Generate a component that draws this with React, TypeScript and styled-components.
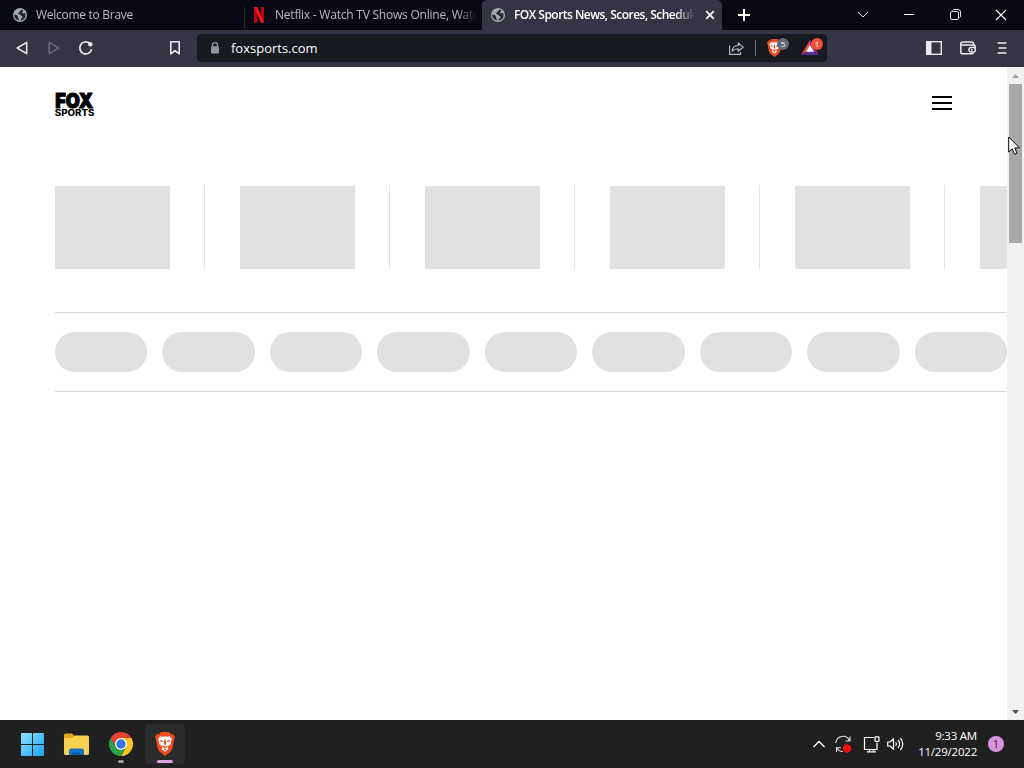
import React from 'react'

import styled, { createGlobalStyle } from 'styled-components'

const GlobalStyle = createGlobalStyle`
    * {
        box-sizing: border-box;
    }

    body {
        margin: 0;
        overflow: hidden;
        font-family: 'Open Sans', 'Noto Sans', sans-serif;
    }

    svg {
        display: block;
        flex: none;
        overflow: visible;
    }
`

const Desktop = styled.div`
    width: 1024px;
    height: 768px;
    display: flex;
    flex-direction: column;
    position: relative;
    overflow: hidden;
    background: #fff;
`

const TabStrip = styled.div`
    height: 30px;
    flex: none;
    display: flex;
    background: #090915;
    color: #fff;
`

const Tab = styled.div<{ $width: number; $inset: number; $active?: boolean }>`
    width: ${(props) => props.$width}px;
    height: 30px;
    padding: 0 5px 0 ${(props) => props.$inset}px;
    display: flex;
    align-items: center;
    border-radius: ${(props) => (props.$active ? '5px 5px 0 0' : '0')};
    background: ${(props) => (props.$active ? '#343445' : 'transparent')};
    color: ${(props) => (props.$active ? '#fff' : '#b9bac3')};
`

const TabDivider = styled.div`
    width: 1px;
    height: 22px;
    margin-top: 7px;
    background: #2b2b38;
`

const TabTitle = styled.div<{ $bold?: boolean; $spacing: number }>`
    flex: 1;
    margin-left: 9px;
    overflow: hidden;
    white-space: nowrap;
    font-size: 12px;
    line-height: 20px;
    font-weight: ${(props) => (props.$bold ? 650 : 400)};
    letter-spacing: ${(props) => props.$spacing}px;
    mask-image: linear-gradient(to left, transparent, #000 20px);
`

const CloseTab = styled.div`
    width: 14px;
    height: 14px;
    margin-left: 8px;
`

const NewTab = styled.div`
    width: 44px;
    display: flex;
    align-items: center;
    justify-content: center;
`

const WindowControls = styled.div`
    display: flex;
    margin-left: auto;
`

const WindowButton = styled.div`
    width: 46px;
    height: 29px;
    display: flex;
    align-items: center;
    justify-content: center;
`

const Toolbar = styled.div`
    height: 37px;
    flex: none;
    display: flex;
    align-items: center;
    padding: 0 0 1px 6px;
    background: #343445;
    color: #e9e9f2;
`

const ToolButton = styled.div<{ $dim?: boolean; $width?: number }>`
    width: ${(props) => props.$width ?? 32}px;
    height: 28px;
    display: flex;
    align-items: center;
    justify-content: center;
    color: ${(props) => (props.$dim ? '#707080' : 'inherit')};
`

const Bookmark = styled(ToolButton)`
    margin-left: 57px;
`

const AddressBar = styled.div`
    width: 630px;
    height: 28px;
    margin-left: 6px;
    margin-right: 90px;
    padding-left: 11px;
    display: flex;
    align-items: center;
    border-radius: 4px;
    background: #171921;
`

const Url = styled.div`
    flex: 1;
    margin-left: 9px;
    color: #fff;
    font-size: 13px;
    letter-spacing: 0;
    line-height: 26px;
`

const BarDivider = styled.div`
    width: 1px;
    height: 16px;
    margin: 0 11px 0 11px;
    background: #75767f;
`

const Extension = styled.div<{ $gap: number }>`
    position: relative;
    width: 22px;
    height: 20px;
    margin-right: ${(props) => props.$gap}px;
`

const ExtensionIcon = styled.div<{ $top: number }>`
    padding-top: ${(props) => props.$top}px;
`

const Badge = styled.div<{ $color: string }>`
    position: absolute;
    top: 0;
    right: 0;
    width: 12px;
    height: 12px;
    border-radius: 6px;
    background: ${(props) => props.$color};
    color: #fff;
    font-size: 8px;
    line-height: 12px;
    text-align: center;
`

const Viewport = styled.div`
    flex: 1;
    display: flex;
    min-height: 0;
    background: #fff;
`

const Page = styled.div`
    width: 1007px;
    padding-left: 55px;
    overflow: hidden;
`

const SiteHeader = styled.div`
    height: 118px;
    padding: 25px 55px 0 0;
    display: flex;
    justify-content: space-between;
`

const MenuButton = styled.div`
    width: 20px;
    height: 14px;
    margin-top: 4px;
    display: flex;
    flex-direction: column;
    justify-content: space-between;
`

const MenuBar = styled.div`
    height: 2px;
    background: #000;
`

const ScoreRow = styled.div`
    display: flex;
    height: 127px;
`

const ScoreCell = styled.div`
    width: 185px;
    height: 84px;
    flex: none;
    display: flex;
    justify-content: space-between;
    padding-right: 35px;
`

const ScoreCard = styled.div`
    width: 115px;
    height: 83px;
    margin-top: 1px;
    background: #e1e1e1;
`

const ScoreDivider = styled.div`
    width: 1px;
    background: #e4e4e4;
`

const PillRow = styled.div`
    height: 80px;
    display: flex;
    align-items: center;
    gap: 15.03px;
    border-top: 1px solid #d5d5d5;
    border-bottom: 1px solid #d5d5d5;
`

const Pill = styled.div`
    width: 92.44px;
    height: 40px;
    flex: none;
    border-radius: 20px;
    background: #e1e1e1;
`

const Scrollbar = styled.div`
    width: 17px;
    display: flex;
    flex-direction: column;
    align-items: center;
    background: #f1f1f1;
`

const ScrollArrow = styled.div`
    width: 17px;
    height: 17px;
    display: flex;
    align-items: center;
    justify-content: center;
`

const ScrollTrack = styled.div`
    flex: 1;
    width: 13px;
`

const ScrollThumb = styled.div`
    height: 159px;
    background: #a8a8a8;
`

const Taskbar = styled.div`
    height: 48px;
    flex: none;
    display: flex;
    align-items: center;
    padding: 0 20px 0 12px;
    background: #202020;
    color: #fff;
`

const TaskButton = styled.div<{ $active?: boolean }>`
    position: relative;
    width: 40px;
    height: 40px;
    margin-right: 4.4px;
    display: flex;
    align-items: center;
    justify-content: center;
    border-radius: 4px;
    background: ${(props) => (props.$active ? '#2b2b2b' : 'transparent')};
`

const RunningMark = styled.div<{ $active?: boolean }>`
    position: absolute;
    bottom: 1px;
    width: ${(props) => (props.$active ? 16 : 6)}px;
    height: 3px;
    border-radius: 2px;
    background: ${(props) => (props.$active ? '#d9a3dd' : '#9a9a9a')};
`

const Tray = styled.div`
    display: flex;
    align-items: center;
    margin-left: auto;
`

const TrayIcon = styled.div<{ $gap: number }>`
    margin-right: ${(props) => props.$gap}px;
`

const Clock = styled.div`
    width: 60px;
    font-size: 11.5px;
    letter-spacing: -0.22px;
    line-height: 16px;
    text-align: right;
    white-space: nowrap;
`

const Notifications = styled.div`
    width: 16px;
    height: 16px;
    margin-left: 11px;
    border-radius: 8px;
    background: #d795dc;
    color: #35203a;
    font-size: 11px;
    line-height: 16px;
    text-align: center;
`

const Cursor = styled.svg`
    position: absolute;
    left: 1008px;
    top: 136px;
`

const Globe = () => (
    <svg width="14" height="14" viewBox="0 0 14 14">
        <circle cx="7" cy="7" r="7" fill="#a5a8ae" />
        <path
            d="M8.5 1.5C8.3 3 7.2 3 6.3 3.4 6.6 4.8 5.2 4.8 4.6 5.2 5.2 6.4 7 5.8 7.5 7 8 8.4 9.8 7.8 9.4 9.4 9 10.6 7.6 10.4 7.3 12.6 9.2 12.7 11 11.6 12 9.8 12.8 8 12.7 6.3 12 4.8 10.8 6 9.6 5.4 9.3 4.2 9.2 3.2 10.4 3 10.2 2.2ZM1.3 6.6C2.8 6.8 4.6 7 4.8 8.6 5 9.9 5.9 10.2 5.7 12.5 3 12 1 9.4 1.3 6.6Z"
            fill="#262634"
        />
    </svg>
)

const NetflixIcon = () => (
    <svg width="14" height="16" viewBox="0 0 14 16">
        <path d="M2 0H5.3V15.5L2 16ZM8.7 0H12V16L8.7 15.5Z" fill="#b20710" />
        <path d="M2 0H5.3L12 16L8.7 15.5Z" fill="#ed1520" />
    </svg>
)

const FoxLogo = () => (
    <svg width="40" height="26" viewBox="0 0 40 26">
        <text
            x="0.2"
            y="16.2"
            fontFamily="Inter, Liberation Sans, sans-serif"
            fontSize="20.5"
            fontWeight="900"
            stroke="#000"
            strokeWidth="1.1"
            textLength="37.8"
            lengthAdjust="spacingAndGlyphs"
        >
            FOX
        </text>
        <text
            x="-0.3"
            y="24.3"
            fontFamily="Inter, Liberation Sans, sans-serif"
            fontSize="8.6"
            fontWeight="800"
            textLength="39.8"
            lengthAdjust="spacingAndGlyphs"
        >
            SPORTS
        </text>
    </svg>
)

const BraveLion = ({ width, height }: { width: number; height: number }) => (
    <svg width={width} height={height} viewBox="0 0 20 24">
        <path
            d="M6 0H14L16 2.3 18.2 2 20 5 19 8 17.4 16.5 15.5 19.5 10 24 4.5 19.5 2.6 16.5 1 8 0 5 1.8 2 4 2.3Z"
            fill="#f04b1c"
        />
        <path
            d="M5.2 4.2 8 4.8 10 4.3 12 4.8 14.8 4.2 17 7.3 15.6 10.3 16 12 12.3 14.4 13.4 17 10 19.8 6.6 17 7.7 14.4 4 12 4.4 10.3 3 7.3Z"
            fill="#fff"
        />
        <path
            d="M4.8 8 8 8.8 7.6 10.2 5.5 9.6ZM15.2 8 12 8.8 12.4 10.2 14.5 9.6ZM9.4 7.5H10.6L11.2 12 10 13.2 8.8 12ZM7.2 13.2 10 14.8 12.8 13.2 11.7 15.4 10 16 8.3 15.4ZM8.3 17 10 16.4 11.7 17 10 18.2Z"
            fill="#e8471c"
        />
    </svg>
)

const BatIcon = () => (
    <svg width="18" height="15" viewBox="0 0 18 15">
        <path d="M9 0 0 15 9 9.5Z" fill="#f0483e" />
        <path d="M9 0 18 15 9 9.5Z" fill="#8b2a8e" />
        <path d="M0 15H18L9 10Z" fill="#593095" />
        <path d="M9 5 13 11.7H5Z" fill="#fff" />
    </svg>
)

const ChromeIcon = () => (
    <svg width="24" height="24" viewBox="0 0 24 24">
        <path d="M1.6 6A12 12 0 0 1 22.4 6H12L6.8 15Z" fill="#e74134" />
        <path d="M22.4 6A12 12 0 0 1 12 24L17.2 15 12 6Z" fill="#fbc51b" />
        <path d="M12 24A12 12 0 0 1 1.6 6L6.8 15A6 6 0 0 0 17.2 15Z" fill="#2aa24a" />
        <circle cx="12" cy="12" r="6" fill="#fff" />
        <circle cx="12" cy="12" r="4.7" fill="#3378e6" />
    </svg>
)

const App: React.FC = () => {
    return (
        <Desktop>
            <GlobalStyle />
            <TabStrip>
                <Tab $width={244} $inset={13}>
                    <Globe />
                    <TabTitle $spacing={-0.28}>Welcome to Brave</TabTitle>
                </Tab>
                <TabDivider />
                <Tab $width={237} $inset={7}>
                    <NetflixIcon />
                    <TabTitle $spacing={-0.22}>
                        Netflix - Watch TV Shows Online, Watch Movies Online
                    </TabTitle>
                </Tab>
                <Tab $width={240} $inset={9} $active>
                    <Globe />
                    <TabTitle $bold $spacing={-0.52}>
                        FOX Sports News, Scores, Schedules, Odds
                    </TabTitle>
                    <CloseTab>
                        <svg width="14" height="14" viewBox="0 0 14 14">
                            <path d="M3.2 3.2 10.8 10.8M10.8 3.2 3.2 10.8" stroke="#fff" strokeWidth="1.7" />
                        </svg>
                    </CloseTab>
                </Tab>
                <NewTab>
                    <svg width="12" height="12" viewBox="0 0 12 12">
                        <path d="M6 0V12M0 6H12" stroke="#fff" strokeWidth="2" />
                    </svg>
                </NewTab>
                <WindowControls>
                    <WindowButton>
                        <svg width="12" height="12" viewBox="0 0 12 12" fill="none" stroke="#ddd">
                            <path d="M1 3 6 8 11 3" />
                        </svg>
                    </WindowButton>
                    <WindowButton>
                        <svg width="10" height="11" viewBox="0 0 10 11">
                            <path d="M0 5.5H10" stroke="#fff" />
                        </svg>
                    </WindowButton>
                    <WindowButton>
                        <svg width="11" height="11" viewBox="0 0 11 11" fill="none" stroke="#ddd">
                            <rect x="0.5" y="2.5" width="8" height="8" rx="1.5" />
                            <path d="M2.5 1.5Q3 .5 4 .5H8Q10.5 .5 10.5 3V7Q10.5 8.2 9.5 8.5" />
                        </svg>
                    </WindowButton>
                    <WindowButton>
                        <svg width="10" height="10" viewBox="0 0 10 10">
                            <path d="M0 0 10 10M10 0 0 10" stroke="#fff" strokeWidth="1.1" />
                        </svg>
                    </WindowButton>
                </WindowControls>
            </TabStrip>
            <Toolbar>
                <ToolButton>
                    <svg width="12" height="14" viewBox="0 0 12 14" fill="none" stroke="currentColor" strokeWidth="1.5" strokeLinejoin="round">
                        <path d="M10.7 1.3V12.7L1.2 7Z" />
                    </svg>
                </ToolButton>
                <ToolButton $dim>
                    <svg width="12" height="14" viewBox="0 0 12 14" fill="none" stroke="currentColor" strokeWidth="1.4" strokeLinejoin="round">
                        <path d="M1.3 1.3V12.7L10.8 7Z" />
                    </svg>
                </ToolButton>
                <ToolButton>
                    <svg width="14" height="14" viewBox="0 0 14 14" fill="none" stroke="currentColor" strokeWidth="1.7">
                        <path d="M12.6 8.3A6 6 0 1 1 10.5 2.2" />
                        <circle cx="11.3" cy="3.2" r="2.2" fill="currentColor" stroke="none" />
                    </svg>
                </ToolButton>
                <Bookmark>
                    <svg width="10" height="14" viewBox="0 0 10 14" fill="none" stroke="currentColor" strokeWidth="1.6">
                        <path d="M.8 .8H9.2V12.8L5 9.6 .8 12.8Z" strokeLinejoin="round" />
                    </svg>
                </Bookmark>
                <AddressBar>
                    <svg width="14" height="12" viewBox="0 0 14 12">
                        <path d="M4.5 5V3.2A2.5 2.5 0 0 1 9.5 3.2V5" fill="none" stroke="#94959d" strokeWidth="1.3" />
                        <rect x="3" y="4.3" width="8" height="7.2" rx="1" fill="#94959d" />
                    </svg>
                    <Url>foxsports.com</Url>
                    <svg width="15" height="13" viewBox="0 0 15 13" fill="none" stroke="#b9bcc4" strokeWidth="1.1">
                        <path d="M.6 3.5V12.4H11.5V10" />
                        <path d="M3.2 9.2C3.4 5.5 5.7 3.6 9.2 3.5V.9L14.2 5.2 9.2 9.3V6.7C6.5 6.6 4.8 7.2 3.2 9.2Z" strokeLinejoin="round" />
                    </svg>
                    <BarDivider />
                    <Extension $gap={12}>
                        <ExtensionIcon $top={1}>
                            <BraveLion width={15} height={18} />
                        </ExtensionIcon>
                        <Badge $color="#646a75">5</Badge>
                    </Extension>
                    <Extension $gap={4}>
                        <ExtensionIcon $top={2}>
                            <BatIcon />
                        </ExtensionIcon>
                        <Badge $color="#f2503b">1</Badge>
                    </Extension>
                </AddressBar>
                <ToolButton $width={34}>
                    <svg width="16" height="14" viewBox="0 0 16 14">
                        <rect x="0.7" y="0.7" width="14.6" height="12.6" fill="none" stroke="currentColor" strokeWidth="1.4" />
                        <rect x="1" y="1" width="4.5" height="12" fill="currentColor" />
                    </svg>
                </ToolButton>
                <ToolButton $width={34}>
                    <svg width="16" height="14" viewBox="0 0 16 14" fill="none" stroke="currentColor" strokeWidth="1.5">
                        <path d="M13.5 4V2.7Q13.5 1 11.8 1H2.5Q.8 1 .8 2.7V11Q.8 12.8 2.5 12.8H11.8Q13.5 12.8 13.5 11.2" />
                        <path d="M1 4H13.5Q15.2 4 15.2 5.5V9.5Q15.2 11 13.7 11H10.7A2.3 2.3 0 0 1 10.7 6.5H15" />
                        <path d="M11 8.8H12.5" />
                    </svg>
                </ToolButton>
                <ToolButton $width={34}>
                    <svg width="10" height="12" viewBox="0 0 10 12" stroke="currentColor" strokeWidth="1.5">
                        <path d="M.5 1H9.5M1.5 6H9.5M.5 11H9.5" />
                    </svg>
                </ToolButton>
            </Toolbar>
            <Viewport>
                <Page>
                    <SiteHeader>
                        <FoxLogo />
                        <MenuButton>
                            <MenuBar />
                            <MenuBar />
                            <MenuBar />
                        </MenuButton>
                    </SiteHeader>
                    <ScoreRow>
                        {[0, 1, 2, 3, 4, 5].map((i) => (
                            <ScoreCell key={i}>
                                <ScoreCard />
                                <ScoreDivider />
                            </ScoreCell>
                        ))}
                    </ScoreRow>
                    <PillRow>
                        {[0, 1, 2, 3, 4, 5, 6, 7, 8].map((i) => (
                            <Pill key={i} />
                        ))}
                    </PillRow>
                </Page>
                <Scrollbar>
                    <ScrollArrow>
                        <svg width="7" height="4" viewBox="0 0 7 4">
                            <path d="M0 4 3.5 0 7 4Z" fill="#a0a0a0" />
                        </svg>
                    </ScrollArrow>
                    <ScrollTrack>
                        <ScrollThumb />
                    </ScrollTrack>
                    <ScrollArrow>
                        <svg width="7" height="4" viewBox="0 0 7 4">
                            <path d="M0 0 3.5 4 7 0Z" fill="#505050" />
                        </svg>
                    </ScrollArrow>
                </Scrollbar>
            </Viewport>
            <Taskbar>
                <TaskButton>
                    <svg width="23" height="23" viewBox="0 0 23 23">
                        <defs>
                            <linearGradient id="start" x1="0" y1="0" x2="1" y2="1">
                                <stop offset="0" stopColor="#8fe3ff" />
                                <stop offset="1" stopColor="#18a2ef" />
                            </linearGradient>
                        </defs>
                        <path d="M0 1Q0 0 1 0H11V11H0ZM12 0H22Q23 0 23 1V11H12ZM0 12H11V23H1Q0 23 0 22ZM12 12H23V22Q23 23 22 23H12Z" fill="url(#start)" />
                    </svg>
                </TaskButton>
                <TaskButton>
                    <svg width="25" height="23" viewBox="0 0 25 23">
                        <path d="M0 2Q0 .5 1.5 .5H8L11 3.5V7H0Z" fill="#e1a51e" />
                        <path d="M0 5H8L10.5 2.5H23.5Q25 2.5 25 4V20.5Q25 22 23.5 22H1.5Q0 22 0 20.5Z" fill="#f8d050" />
                        <path d="M5 22V17.5Q5 15.5 7 15.5H18Q20 15.5 20 17.5V22Z" fill="#1674c5" />
                        <path d="M8.5 22V19.5H16.5V22Z" fill="#0d5b9e" />
                    </svg>
                </TaskButton>
                <TaskButton>
                    <ChromeIcon />
                    <RunningMark />
                </TaskButton>
                <TaskButton $active>
                    <BraveLion width={20} height={24} />
                    <RunningMark $active />
                </TaskButton>
                <Tray>
                    <TrayIcon $gap={10}>
                        <svg width="12" height="8" viewBox="0 0 12 8" fill="none" stroke="#fff" strokeWidth="1.3">
                            <path d="M.5 7 6 1.5 11.5 7" />
                        </svg>
                    </TrayIcon>
                    <TrayIcon $gap={11}>
                        <svg width="17" height="17" viewBox="0 0 17 17" fill="none" stroke="#e5e5e5" strokeWidth="1.1">
                            <path d="M.8 7A7.2 7.2 0 0 1 14.5 4.5M15 .5V5H10.5M1.5 16V11.7H5.8M1.8 12A7 7 0 0 0 8 15.5" />
                            <circle cx="12" cy="12.5" r="4.2" fill="#ef1010" stroke="none" />
                        </svg>
                    </TrayIcon>
                    <TrayIcon $gap={7}>
                        <svg width="17" height="17" viewBox="0 0 17 17" fill="none" stroke="#fff" strokeWidth="1.2">
                            <path d="M11 1.5H1.5V13.5H14V6.5M6.5 13.5V15.5M10.5 13.5V15.5M4 15.8H13" />
                            <rect x="12" y="0.8" width="4" height="4.5" rx="0.5" />
                        </svg>
                    </TrayIcon>
                    <TrayIcon $gap={13}>
                        <svg width="17" height="14" viewBox="0 0 17 14" fill="none" stroke="#fff" strokeWidth="1.2">
                            <path d="M.7 5V9H3L6.5 12.3V1.7L3 5Z" strokeLinejoin="round" />
                            <path d="M8.7 5A3.3 3.3 0 0 1 8.7 9M11 3A5.8 5.8 0 0 1 11 11M13.3 1A8.5 8.5 0 0 1 13.3 13" />
                        </svg>
                    </TrayIcon>
                    <Clock>
                        9:33 AM
                        <br />
                        11/29/2022
                    </Clock>
                    <Notifications>1</Notifications>
                </Tray>
            </Taskbar>
            <Cursor width="13" height="20" viewBox="0 0 13 20">
                <path d="M.7 1V16L4.2 12.8 6.5 18.3 9 17.2 6.7 11.9H11.5Z" fill="#fff" stroke="#000" />
            </Cursor>
        </Desktop>
    )
}

export default App
